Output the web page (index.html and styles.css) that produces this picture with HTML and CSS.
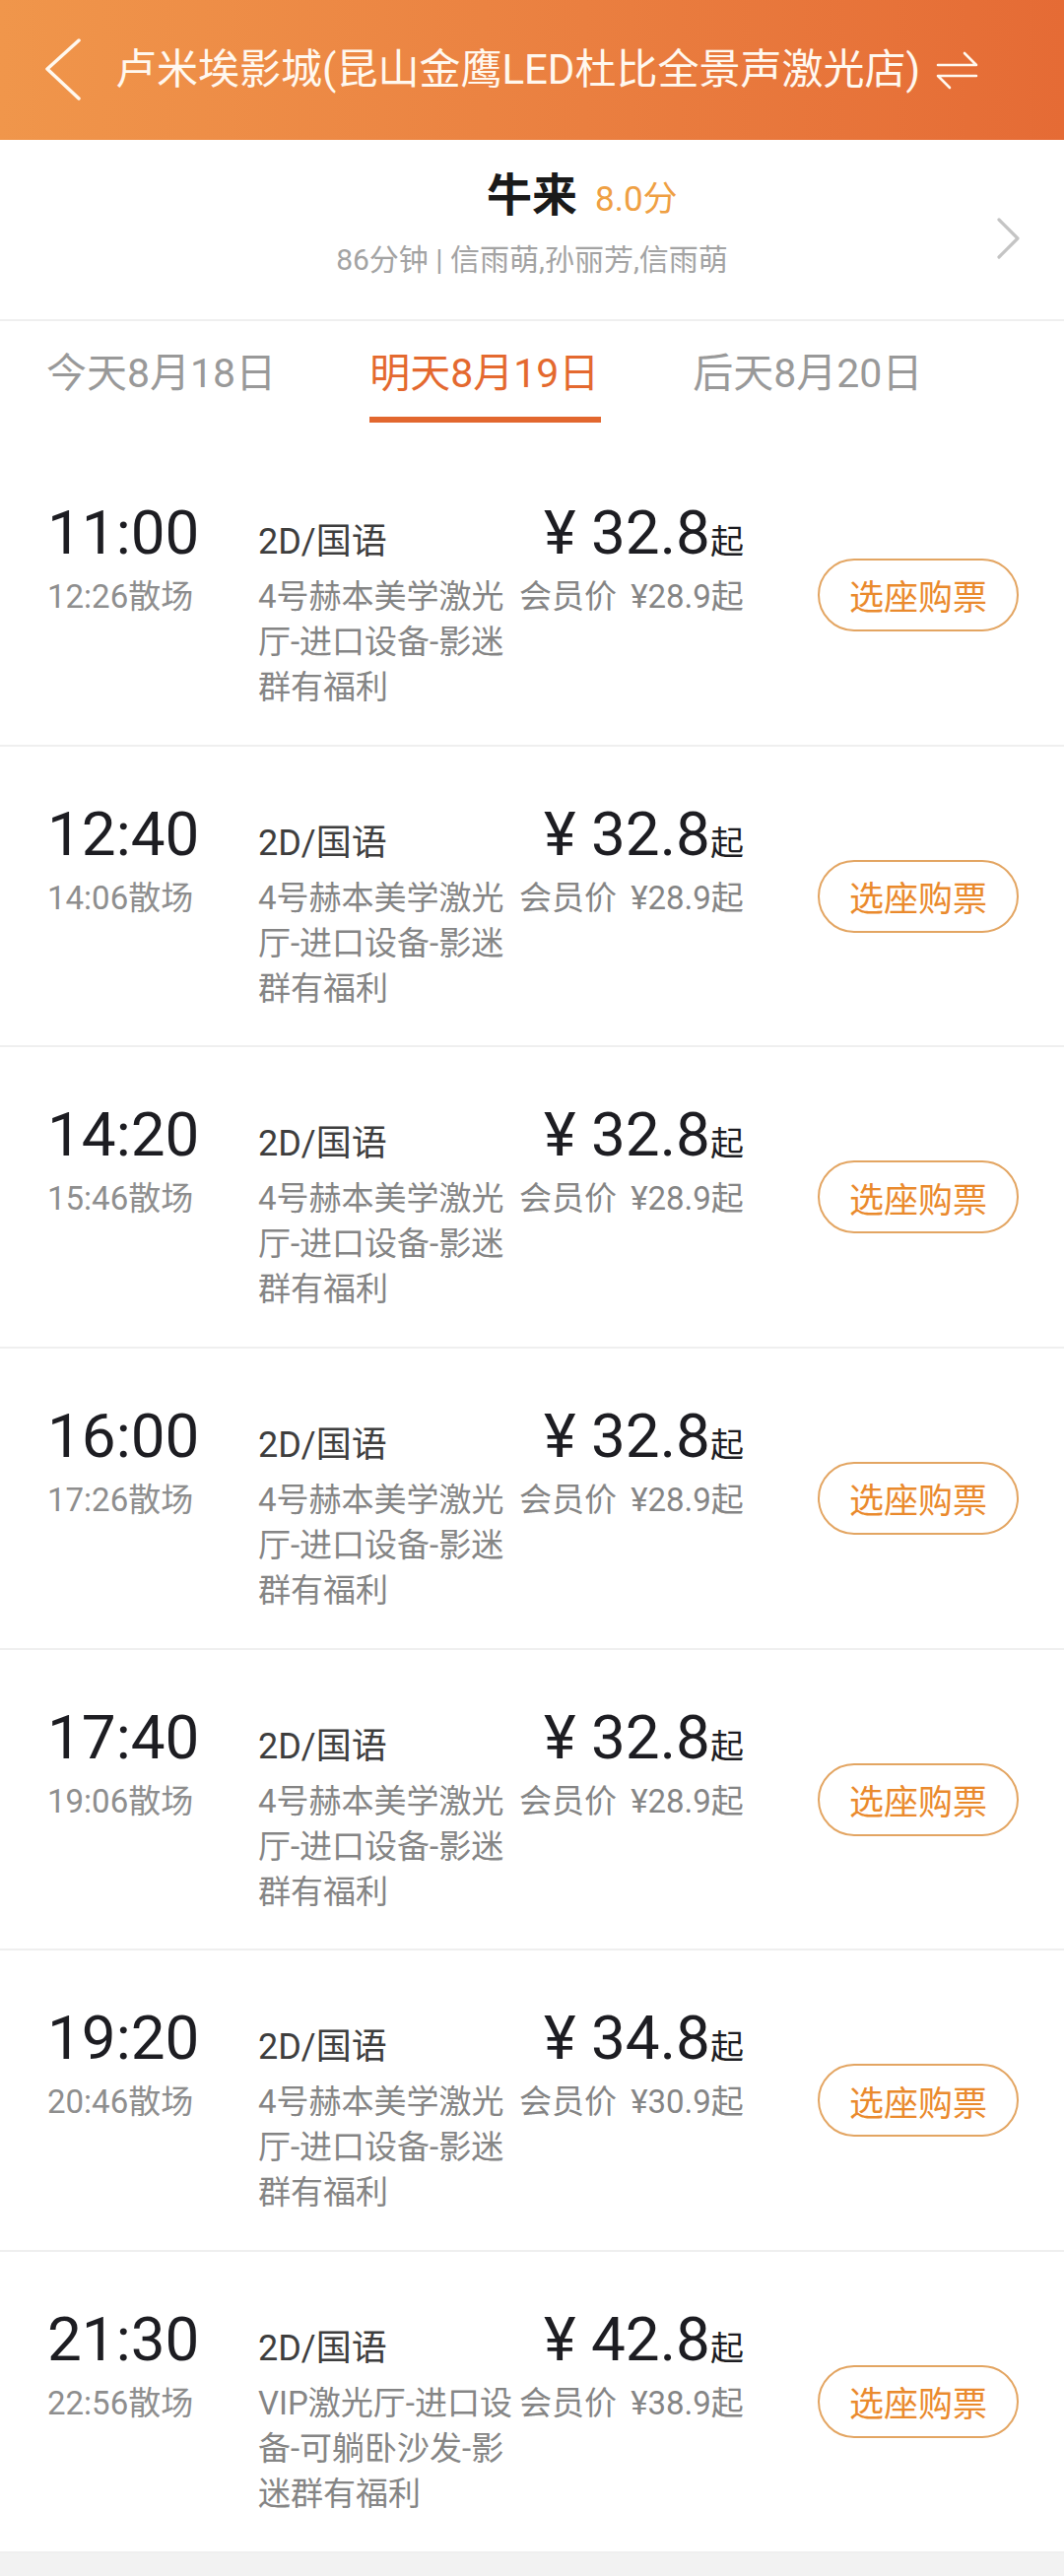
FILE: index.html
```html
<!DOCTYPE html>
<html lang="zh-CN">
<head>
    <meta charset="UTF-8">
    <meta name="viewport" content="width=device-width, initial-scale=1.0">
    <title>选座购票</title>
    <link rel="stylesheet" href="styles.css">
</head>
<body>

    <!-- Top bar -->
    <header class="topbar">
        <svg class="back" width="40" height="64" viewBox="0 0 40 64">
            <polyline points="36,2 4,31 36,61" fill="none" stroke="#fff8ef" stroke-width="3.5" stroke-linecap="round" stroke-linejoin="round"/>
        </svg>
        <h1 class="cinema">卢米埃影城(昆山金鹰LED杜比全景声激光店)</h1>
        <svg class="swap" width="44" height="44" viewBox="0 0 44 44">
            <path d="M2 17 H41 L29 5 M41 28 H2 L14 40" fill="none" stroke="#fff8ef" stroke-width="2.6" stroke-linecap="round" stroke-linejoin="round"/>
        </svg>
    </header>

    <!-- Movie info -->
    <section class="movie">
        <div class="movie-side"></div>
        <div class="movie-main">
            <div class="movie-title">
                <span></span>
                <span class="movie-name">牛来</span>
                <span class="movie-score">8.0分</span>
            </div>
            <p class="movie-meta">86分钟 | 信雨萌,孙丽芳,信雨萌</p>
        </div>
        <div class="movie-side">
            <svg class="more" width="24" height="44" viewBox="0 0 24 44">
                <polyline points="3,3 22,22 3,41" fill="none" stroke="#c4c4c4" stroke-width="3.2" stroke-linecap="round" stroke-linejoin="round"/>
            </svg>
        </div>
    </section>

    <!-- Date tabs -->
    <nav class="dates">
        <a class="date">今天8月18日</a>
        <a class="date active">明天8月19日</a>
        <a class="date">后天8月20日</a>
    </nav>

    <!-- Show list -->
    <main class="shows">

        <div class="show">
            <div class="show-time">
                <div class="start">11:00</div>
                <div class="end">12:26散场</div>
            </div>
            <div class="show-info">
                <div class="info-top">
                    <span class="format">2D/国语</span>
                    <span class="price">¥ 32.8<small>起</small></span>
                </div>
                <div class="info-bottom">
                    <span class="hall">4号赫本美学激光厅-进口设备-影迷群有福利</span>
                    <span class="member">会员价 ¥28.9起</span>
                </div>
            </div>
            <a class="buy">选座购票</a>
        </div>

        <div class="show">
            <div class="show-time">
                <div class="start">12:40</div>
                <div class="end">14:06散场</div>
            </div>
            <div class="show-info">
                <div class="info-top">
                    <span class="format">2D/国语</span>
                    <span class="price">¥ 32.8<small>起</small></span>
                </div>
                <div class="info-bottom">
                    <span class="hall">4号赫本美学激光厅-进口设备-影迷群有福利</span>
                    <span class="member">会员价 ¥28.9起</span>
                </div>
            </div>
            <a class="buy">选座购票</a>
        </div>

        <div class="show">
            <div class="show-time">
                <div class="start">14:20</div>
                <div class="end">15:46散场</div>
            </div>
            <div class="show-info">
                <div class="info-top">
                    <span class="format">2D/国语</span>
                    <span class="price">¥ 32.8<small>起</small></span>
                </div>
                <div class="info-bottom">
                    <span class="hall">4号赫本美学激光厅-进口设备-影迷群有福利</span>
                    <span class="member">会员价 ¥28.9起</span>
                </div>
            </div>
            <a class="buy">选座购票</a>
        </div>

        <div class="show">
            <div class="show-time">
                <div class="start">16:00</div>
                <div class="end">17:26散场</div>
            </div>
            <div class="show-info">
                <div class="info-top">
                    <span class="format">2D/国语</span>
                    <span class="price">¥ 32.8<small>起</small></span>
                </div>
                <div class="info-bottom">
                    <span class="hall">4号赫本美学激光厅-进口设备-影迷群有福利</span>
                    <span class="member">会员价 ¥28.9起</span>
                </div>
            </div>
            <a class="buy">选座购票</a>
        </div>

        <div class="show">
            <div class="show-time">
                <div class="start">17:40</div>
                <div class="end">19:06散场</div>
            </div>
            <div class="show-info">
                <div class="info-top">
                    <span class="format">2D/国语</span>
                    <span class="price">¥ 32.8<small>起</small></span>
                </div>
                <div class="info-bottom">
                    <span class="hall">4号赫本美学激光厅-进口设备-影迷群有福利</span>
                    <span class="member">会员价 ¥28.9起</span>
                </div>
            </div>
            <a class="buy">选座购票</a>
        </div>

        <div class="show">
            <div class="show-time">
                <div class="start">19:20</div>
                <div class="end">20:46散场</div>
            </div>
            <div class="show-info">
                <div class="info-top">
                    <span class="format">2D/国语</span>
                    <span class="price">¥ 34.8<small>起</small></span>
                </div>
                <div class="info-bottom">
                    <span class="hall">4号赫本美学激光厅-进口设备-影迷群有福利</span>
                    <span class="member">会员价 ¥30.9起</span>
                </div>
            </div>
            <a class="buy">选座购票</a>
        </div>

        <div class="show">
            <div class="show-time">
                <div class="start">21:30</div>
                <div class="end">22:56散场</div>
            </div>
            <div class="show-info">
                <div class="info-top">
                    <span class="format">2D/国语</span>
                    <span class="price">¥ 42.8<small>起</small></span>
                </div>
                <div class="info-bottom">
                    <span class="hall">VIP激光厅-进口设备-可躺卧沙发-影迷群有福利</span>
                    <span class="member">会员价 ¥38.9起</span>
                </div>
            </div>
            <a class="buy">选座购票</a>
        </div>

    </main>

</body>
</html>
```

FILE: styles.css
```css
* {
    margin: 0;
    padding: 0;
    box-sizing: border-box;
}

body {
    font-family: Roboto, "Noto Sans CJK SC", sans-serif;
    background-color: #f2f2f2;
    color: #1d1d22;
    width: 1080px;
}

/* Top bar */
.topbar {
    height: 142px;
    display: flex;
    align-items: center;
    padding-left: 44px;
    background: linear-gradient(90deg, #f0964b 0%, #ea7f40 55%, #e56b35 100%);
    color: #fff8ef;
}

.back {
    display: block;
    flex: 0 0 auto;
}

.cinema {
    margin-left: 33px;
    font-size: 42px;
    font-weight: normal;
    line-height: 1;
    white-space: nowrap;
}

.swap {
    display: block;
    margin-left: 16px;
    flex: 0 0 auto;
}

/* Movie info */
.movie {
    height: 184px;
    display: flex;
    background-color: #fff;
    border-bottom: 2px solid #efefef;
}

.movie-side {
    flex: 0 0 80px;
}

.movie-main {
    flex: 1;
    padding-top: 28px;
}

.movie-title {
    display: grid;
    grid-template-columns: 1fr auto 1fr;
    align-items: baseline;
    line-height: 56px;
}

.movie-name {
    font-size: 46px;
    font-weight: bold;
    color: #1a1a1a;
}

.movie-score {
    margin-left: 18px;
    font-size: 35px;
    color: #efa043;
}

.movie-meta {
    margin-top: 13px;
    text-align: center;
    font-size: 30px;
    line-height: 40px;
    color: #a3a3a3;
}

.more {
    display: block;
    margin: 78px 0 0 11px;
}

/* Date tabs */
.dates {
    height: 126px;
    display: flex;
    gap: 95px;
    padding: 27px 0 0 47px;
    background-color: #fff;
}

.date {
    font-size: 41px;
    line-height: 52px;
    color: #999;
    white-space: nowrap;
}

.date.active {
    color: #e4692f;
}

.date.active::after {
    content: "";
    display: block;
    height: 6px;
    margin: 18px -2px 0 0;
    background-color: #e2672f;
}

/* Show list */
.show {
    height: 305.7px;
    display: flex;
    align-items: center;
    padding: 0 46px 0 48px;
    background-color: #fff;
    border-bottom: 2px solid #efefef;
}

.show-time,
.show-info {
    align-self: flex-start;
    padding-top: 58px;
}

.show-time {
    flex: 0 0 214px;
}

.show-info {
    flex: 0 0 492px;
}

.start {
    height: 62px;
    font-size: 62px;
    line-height: 62px;
    color: #1d1d22;
}

.end {
    margin-top: 11px;
    font-size: 33px;
    line-height: 46px;
    color: #8e8e8e;
}

.info-top {
    height: 62px;
    display: flex;
    justify-content: space-between;
    align-items: baseline;
    line-height: 62px;
}

.format {
    font-size: 36px;
    color: #3e3e3e;
}

.price {
    font-size: 62px;
    color: #1d1d22;
}

.price small {
    font-size: 34px;
    line-height: 1;
}

.info-bottom {
    margin-top: 11px;
    display: flex;
    justify-content: space-between;
    align-items: flex-start;
    font-size: 33px;
    line-height: 46px;
    color: #858585;
}

.hall {
    width: 265px;
}

.member {
    white-space: nowrap;
    word-spacing: 6px;
}

.buy {
    margin-left: auto;
    width: 204px;
    height: 74px;
    display: flex;
    align-items: center;
    justify-content: center;
    border: 2px solid #e3a562;
    border-radius: 37px;
    font-size: 35px;
    color: #ea8a2d;
}
```
